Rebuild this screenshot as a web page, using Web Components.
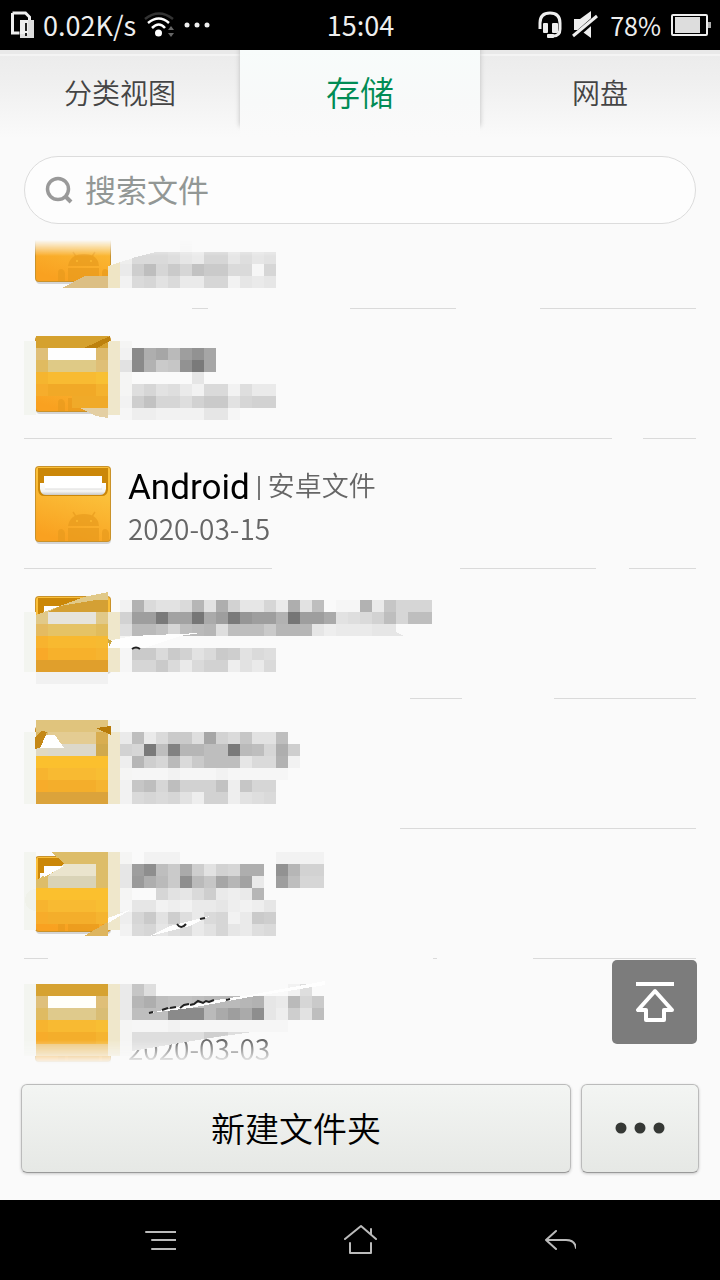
<!DOCTYPE html>
<html lang="zh-CN">
<head>
<meta charset="utf-8">
<meta name="viewport" content="width=device-width">
<title>存储</title>
<style>
html,body{margin:0;height:100%;background:#fafafa}
body{font-family:"Noto Sans CJK SC","Noto Sans",sans-serif}
</style>
</head>
<body>
<file-manager></file-manager>
<script>
const define = (name, html) => customElements.define(name, class extends HTMLElement {
  constructor() {
    super();
    this.attachShadow({mode: 'open'});
  }
  connectedCallback() {
    const t = document.createElement('template');
    t.innerHTML = typeof html === 'function' ? html(this) : html;
    this.shadowRoot.replaceChildren(t.content.cloneNode(true));
  }
});

define('status-bar', `
<style>
:host{display:grid;grid-template-columns:1fr auto 1fr;align-items:center;height:50px;flex:none;padding:0 9px 0 10px;background:#000;color:#eee;font-size:27px;line-height:36px}
div{display:flex;align-items:center}
.end{justify-content:flex-end}
.speed{margin:0 8px}
.pct{font-size:25px;margin:0 10px 0 12px}
svg{display:block;flex:none}
.mute{margin-left:10px}
.more{margin-left:10px}
</style>
<div>
 <svg width="25" height="28" viewBox="0 0 25 28"><path d="M2.500 2h13l4 4v4M2.500 2v20h7" fill="none" stroke="#eee" stroke-width="3"/><path d="M10 9h14v18H10z" fill="#ddd"/><path d="M10 9h8v14h-8z" fill="#fff" opacity=".5"/><path d="M16 12v8M16 22v3" stroke="#222" stroke-width="2"/></svg>
 <span class="speed">0.02K/s</span>
 <svg width="30" height="26" viewBox="0 0 30 26"><g fill="none" stroke-width="2.500"><path d="M1 7Q15-4 29 7" stroke="#333"/><path d="M4 11Q15 2 25 11M8 16Q15 9 21 16" stroke="#fff"/></g><circle cx="14.500" cy="21" r="3.500" fill="#fff"/><path d="M24 18l3-4 3 4zM24 21l3 4 3-4z" fill="#666"/></svg>
 <svg class="more" width="26" height="6" viewBox="0 0 26 6" fill="#eee"><circle cx="3" cy="3" r="2.500"/><circle cx="13" cy="3" r="2.500"/><circle cx="23" cy="3" r="2.500"/></svg>
</div>
<span>15:04</span>
<div class="end">
 <svg width="24" height="28" viewBox="0 0 24 28"><path d="M2 18V12Q2 2 12 2T22 12V18Q22 25 15 25H10" fill="none" stroke="#eee" stroke-width="3"/><rect x="5" y="12" width="5" height="10" rx="1" fill="#eee"/><rect x="14" y="12" width="6" height="10" rx="1" fill="#eee"/><rect x="9" y="23" width="7" height="4" rx="1" fill="#eee"/></svg>
 <svg class="mute" width="26" height="28" viewBox="0 0 26 28"><path d="M2 8h6l11-8v27L8 19H2z" fill="#eee"/><path d="M2 26L25 6" stroke="#000" stroke-width="6"/><path d="M1 25L25 5" stroke="#eee" stroke-width="3"/></svg>
 <span class="pct">78%</span>
 <svg width="40" height="24" viewBox="0 0 40 24"><rect x="1" y="2" width="35" height="20" rx="1" fill="none" stroke="#eee" stroke-width="2"/><path d="M4 4h25v16H4z" fill="#ddd"/><path d="M37 9h3v6h-3z" fill="#aaa"/></svg>
</div>`);

define('tab-bar', `
<style>
:host{display:grid;grid-template-columns:repeat(3,1fr);height:88px;flex:none;background:linear-gradient(#e9e9e9 0 4px,#f4f4f4 4px 6px,#ececec 6px,#f0f0f0 40%,#fafafa)}
button{border:0;padding:0 0 4px;background:none;font:28px/40px "Noto Sans CJK SC",sans-serif;font-weight:350;color:#444}
button[aria-selected=true]{font-size:34px;color:#008c55;background:linear-gradient(#f8fcfb,#f8f9f9 60%,#fafafa);box-shadow:0 -12px 5px #bbb;clip-path:inset(0 -8px)}
</style>
<button role="tab" aria-selected="false">分类视图</button><button role="tab" aria-selected="true">存储</button><button role="tab" aria-selected="false">网盘</button>`);

define('search-field', `
<style>
:host{display:block;flex:none;margin:18px 24px 16px}
label{display:flex;align-items:center;box-sizing:border-box;height:68px;border:1px solid #dcdcdc;border-radius:34px;background:#fdfdfd;padding:0 20px}
svg{flex:none;display:block}
input{flex:1;min-width:0;border:0;outline:0;background:none;padding:0 0 2px;margin-left:12px;font:31px/44px "Noto Sans CJK SC",sans-serif}
input::placeholder{color:#929795;opacity:1}
</style>
<label><svg width="28" height="30" viewBox="0 0 28 30" fill="none" stroke="#999" stroke-width="3.500"><circle cx="13" cy="14" r="10.500"/><path d="M20 21l6 6" stroke-width="4"/></svg>
<input type="search" placeholder="搜索文件" aria-label="搜索文件"></label>`);

define('folder-icon', `
<style>:host{display:block;width:78px;height:80px}svg{display:block}</style>
<svg width="78" height="80" viewBox="0 0 78 80" aria-hidden="true">
<defs><linearGradient id="b" x2="0.400" y2="1" x1="0.700"><stop offset=".3" stop-color="#fbc03a"/><stop offset="1" stop-color="#f9a120"/></linearGradient>
<linearGradient id="p" x2="0" y2="1"><stop stop-color="#fff"/><stop offset=".7" stop-color="#f3f3f1"/><stop offset="1" stop-color="#c9c7c2"/></linearGradient></defs>
<rect x="1" y="3" width="75" height="75" rx="4" fill="#000" opacity=".15"/>
<rect width="76" height="76" rx="4" fill="#c9922a"/>
<rect x="1" y="1" width="74" height="74" rx="3" fill="url(#b)"/>
<path d="M3 2h70v22q-1 6-6 6H9q-5 0-6-6z" fill="#cb8708"/>
<path d="M9 10h58v10H9z" fill="#fff"/><path d="M5 17h66v6q-1 6-6 6H11q-5 0-6-6z" fill="url(#p)"/><path d="M10 10h56v13H10z" fill="#fff"/><path d="M10 23h57" stroke="#ddd"/>
<g fill="#e79a1c" opacity=".65"><path d="M33 60q2-12 16-12t15 12zM33 62h31v13H33zM23 75V67q0-4 3-4t4 4v8zM67 75V67q0-4 3-4t4 4v8z"/><path d="M38 46l4 6M60 46l-4 6" stroke="#e79a1c" stroke-width="1.500"/></g><circle cx="42" cy="55" r="1" fill="#fbb830"/><circle cx="56" cy="55" r="1" fill="#fbb830"/>
</svg>`);

// Pixelation: one character is one 12px cell, darker from 0 (none) to z.
const CELL = 12;
const gray = (y, cells, x = 120) => [...cells].map((c, i) => {
  const v = parseInt(c, 36);
  if (!v) return '';
  const g = 250 - 4 * v;
  return `<rect x="${x + i * CELL}" y="${y}" width="12" height="12" fill="rgb(${g},${g},${g})"/>`;
}).join('');
const box = (x, y, w, h, f) => `<rect x="${x}" y="${y}" width="${w}" height="${h}" fill="${f}"/>`;
const poly = (p, f) => `<polygon points="${p}" fill="${f}"/>`;
const band = (y, a, b = a, c = a) => box(36, y, 12, 12, a) + box(48, y, 48, 12, b) + box(96, y, 12, 12, c);
const erase = (...spans) => spans.map(([a, b]) => box(a, 126, b - a, 6, '#fafafa')).join('');
const side = (y, h) => box(24, y, 12, h, '#f3f5f0') + box(108, y, 12, h, '#efe7cb') + box(120, y, 12, h, '#f5f5f4');
const warm = y => band(y, '#f7b42f', '#f8ba32', '#f8be33') + band(y + 12, '#f7ac2a', '#f4ae2b', '#f5b430');
const ink = d => `<path d="${d}" fill="none" stroke="#222" stroke-width="2" shape-rendering="auto"/>`;

const MASKS = {
  first: poly('62,109 85,97 108,97 108,109', '#dcbf84') + poly('108,87 120,83 120,109 108,109', '#efe5c5') + poly('120,83 156,73 156,97 120,97', '#eeeeed')
    + gray(61, '000001') + poly('132,79 156,73 156,85 132,85', '#dadada') + gray(73, '0008754995756') + gray(85, '4bf9c9ecc8819') + gray(97, '2896844992545') + erase([24, 192], [208, 350], [456, 540]),
  second: side(32, 74) + band(27, '#d5a12e') + band(39, '#dfbf78', '#fefefe', '#ddba6c') + band(51, '#e0bb60', '#dfca86', '#dfbf76') + band(63, '#f5b52f', '#f8bb32', '#f8c034') + band(75, '#f6ad2c', '#f1a927', '#f4b22e')
    + box(72, 87, 36, 12, '#f0aa29') + poly('80,99 108,99 108,109 96,107', '#e4cfa3') + poly('84,39 110,27 110,32 97,39', '#bd810d')
    + gray(39, '2sjlgnql') + gray(51, '6sicdqwl') + gray(63, '0000005') + gray(75, '0796742882744') + gray(87, '2be997acc69aa') + gray(99, '1332222551') + erase([612, 643]),
  android: erase([272, 460], [596, 629]),
  third: side(43, 60) + poly('36,46 84,28 108,23 108,55 36,55', '#e1c988') + poly('48,43 60,37 96,31 108,31 108,43', '#d4a034') + box(48, 43, 48, 12, '#e6e4dc') + band(55, '#e4bb61', '#e5c366', '#e1bc5c')
    + band(67, '#f8b32e', '#f8b930', '#f6ba32') + band(79, '#f9a928', '#f7b12b', '#f6b430') + band(91, '#e09f2c') + band(103, '#f1f1f1')
    + gray(31, '2i8668h6ja5594j6f011i4d999') + gray(43, 'annwmmxknwpnnixnnk678af9ff') + gray(55, '7gge9fgh7fffchhh53444555') + poly('396,55 434,55 434,67 404,67 396,63', '#fafafa')
    + gray(79, '1cc8ca68cb687') + gray(91, '199c848aa3648') + poly('108,72 132,67 200,64 180,67 144,79 108,79', '#fefefe') + ink('M132 80q4-3 8 0') + poly('108,70 112,72 109,78', '#caa640') + erase([24, 410], [462, 554]),
  fourth: side(33, 72) + box(108, 21, 12, 12, '#f3f4ee') + band(21, '#e0c47d') + band(33, '#dbb967', '#e4cc92', '#d8ad50') + band(45, '#e0d9c3', '#dcd8ca', '#d0a94d') + band(57, '#fbc02e') + warm(69) + band(93, '#dba33b')
    + poly('35,38 42,32 47,33 41,48 35,50', '#c58816') + poly('40,49 46,36 55,36 64,49', '#fff') + poly('96,29 111,27 111,36', '#b87b08')
    + gray(33, '4f48cc7la8d66f') + gray(45, 'a9wfuhhffwgf9jb') + gray(57, '3hb9g8cfff588i2') + gray(69, '01112111211111') + gray(81, '2df9faaae3d99') + gray(93, '2898963aa3678') + erase([24, 400]),
  fifth: side(23, 78) + '<circle cx="36" cy="71" r="11" fill="#f0f2ea"/>' + poly('51,23 108,23 108,59 36,59 36,51 65,35', '#ddbd69') + box(48, 47, 48, 12, '#d9d3b7') + poly('48,47 64,35 96,35 96,47', '#eae4cd') + poly('44,37 64,37 48,46 44,48', '#fff') + band(59, '#fbc02e') + warm(71)
    + poly('84,107 108,93 108,107', '#deb55e') + gray(23, '00222000000002222') + gray(35, '5nrfckb6a9jj0qhaa') + gray(47, '5ojgcrgdlhm40nf99') + gray(59, '0009658b434h') + gray(71, '1552324453235') + gray(83, '39c6b748924cb') + gray(95, '2895784695478')
    + poly('108,89 132,80 108,94', '#fefefe') + poly('150,107 170,97 210,87 190,97', '#fefefe') + ink('M177 95q4 6 9 0M200 90l5-1') + erase([48, 433], [437, 533]),
  sixth: side(25, 72) + band(25, '#d6a231') + band(37, '#dfc07b', '#fffffa', '#dfbf78') + band(49, '#dfbb62', '#dfca8c', '#d9bd74') + warm(61) + band(85, '#edc678')
    + gray(25, '4d70000000000027') + gray(37, '4hjfeefggghi54g9c') + gray(49, '4fffsssgknkr53b6ff') .replace(/<rect x="324"[^>]*>/, '') + gray(61, '01112111111111') + poly('132,73 252,73 204,80 132,92', '#dedede') + poly('204,73 228,73 228,76 204,80', '#cfcfcf')
    + poly('150,54 190,45 250,36 325,22 325,26 250,38 190,49', '#fefefe') + ink('M149 54l4-1M162 51l6-2M170 49l6-1M180 49l4-3 5-1M190 46l4-1 4-3 5 2 3-2 3 1 5-2M226 41l4-1')
};

define('file-row', el => `
<style>
:host{display:flex;align-items:flex-end;flex:none;overflow:hidden}
:host([mask=first]){height:69px}
article{position:relative;flex:1;display:flex;align-items:flex-start;box-sizing:border-box;height:130px;padding:27px 0 0 35px}
article::after{content:"";position:absolute;left:24px;right:24px;bottom:0;border-bottom:1px solid #dadada}
.text{margin-left:15px;display:flex;flex-direction:column}
.name{display:flex;align-items:center;height:42px}
.date{margin-top:4px;font-size:28px;line-height:32px;font-weight:350;color:#666}
svg{position:absolute;inset:0;width:100%;height:100%;z-index:1;shape-rendering:crispEdges}
</style>
<article><folder-icon></folder-icon><div class="text"><div class="name"><slot></slot></div><div class="date"><slot name="date"></slot></div></div>
<svg aria-hidden="true">${MASKS[el.getAttribute('mask')] || ''}</svg></article>`);

define('file-name', `
<style>
:host{display:flex;align-items:center;font-size:35px;line-height:42px;font-family:Roboto,sans-serif;color:#000;padding-top:2px}
.note{margin-left:8px;padding:0 0 6px 10px;color:#666;font:27px/36px "Noto Sans CJK SC",sans-serif;font-weight:350;background:linear-gradient(#777,#777) 0 50%/2px 24px no-repeat}
</style><slot></slot><span class="note"><slot name="note"></slot></span>`);

define('file-list', `
<style>
:host{display:flex;flex-direction:column;flex:1 1 0;min-height:0;position:relative}
.scroll{flex:1;min-height:0;overflow:hidden;display:flex;flex-direction:column;-webkit-mask-image:linear-gradient(transparent,#000 16px,#000 calc(100% - 24px),transparent);mask-image:linear-gradient(transparent,#000 16px,#000 calc(100% - 24px),transparent)}
button{position:absolute;right:23px;bottom:20px;width:85px;height:84px;border:0;border-radius:5px;background:#7c7c7c;padding:0}
svg{display:block;margin:auto}
</style>
<div class="scroll">
<file-row mask="first"></file-row>
<file-row mask="second"></file-row>
<file-row mask="android"><file-name>Android<span slot="note">安卓文件</span></file-name><span slot="date">2020-03-15</span></file-row>
<file-row mask="third"></file-row>
<file-row mask="fourth"></file-row>
<file-row mask="fifth"></file-row>
<file-row mask="sixth"><span slot="date">2020-03-03</span></file-row>
</div>
<button aria-label="回到顶部"><svg width="40" height="42" viewBox="0 0 40 42" fill="none" stroke="#fff" stroke-width="4" stroke-linejoin="round"><path d="M1 3h38"/><path d="M20 10L3 29h8v10h18V29h8z"/></svg></button>`);

define('action-bar', `
<style>
:host{display:flex;gap:10px;flex:none;padding:20px 21px 27px}
button{height:89px;border:1px solid #bbb;border-bottom-color:#999;border-radius:6px;background:linear-gradient(#f3f5f3,#e6e8e5);box-shadow:0 1px 3px #0003;padding:0 0 2px;font:34px/48px "Noto Sans CJK SC",sans-serif;font-weight:350;color:#000}
.new{flex:1}
.more{flex:0 0 118px}
svg{display:block;margin:auto}
</style>
<button class="new">新建文件夹</button>
<button class="more" aria-label="更多"><svg width="50" height="14" viewBox="0 0 50 14" fill="#353835"><circle cx="6" cy="7" r="5.500"/><circle cx="25" cy="7" r="5.500"/><circle cx="44" cy="7" r="5.500"/></svg></button>`);

define('nav-bar', `
<style>
:host{display:flex;justify-content:center;height:80px;flex:none;background:#000}
button{flex:0 1 200px;border:0;padding:0;background:none}
svg{display:block;margin:auto}
</style>
<button aria-label="菜单"><svg width="32" height="32" viewBox="0 0 32 32" stroke="#bbb" stroke-width="2" stroke-linecap="round"><path d="M2 8h30M8 16h24M8 25h24"/></svg></button>
<button aria-label="主页"><svg width="34" height="32" viewBox="0 0 34 32" fill="none" stroke="#bbb" stroke-width="2" stroke-linecap="round" stroke-linejoin="round"><path d="M2 15L18 2l15 13M28 10V5M7 19v10h21V19"/></svg></button>
<button aria-label="返回"><svg width="32" height="32" viewBox="0 0 32 32" fill="none" stroke="#bbb" stroke-width="2" stroke-linecap="round" stroke-linejoin="round"><path d="M12 7L2 16l10 9M2 16h20q9 0 10 8"/></svg></button>`);

define('file-manager', `
<style>:host{display:flex;flex-direction:column;height:100vh;min-height:600px;background:#fafafa}</style>
<status-bar></status-bar><tab-bar role="tablist"></tab-bar><search-field></search-field><file-list></file-list><action-bar></action-bar><nav-bar></nav-bar>`);
</script>
</body>
</html>
